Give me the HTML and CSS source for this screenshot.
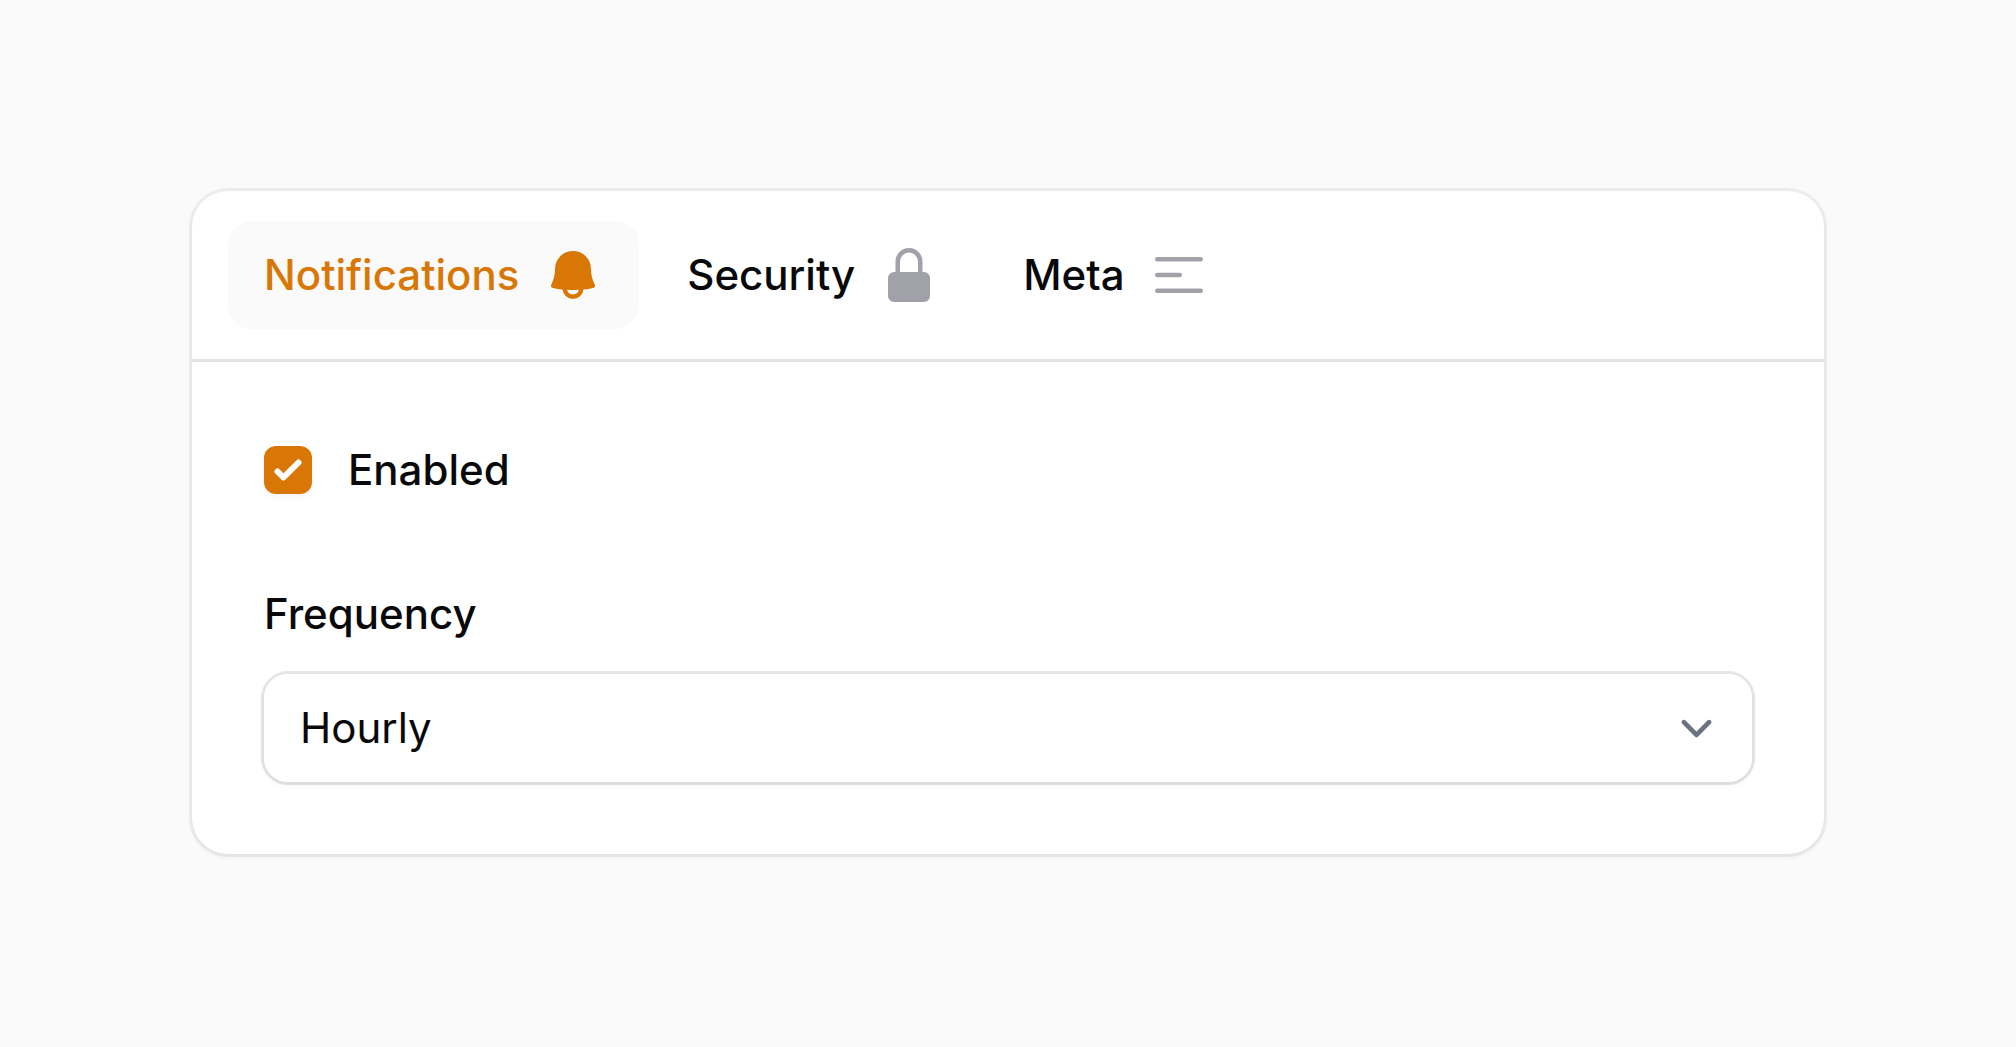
FILE: index.html
```html
<!DOCTYPE html>
<html lang="en">
<head>
    <meta charset="utf-8">
    <title>Notification settings</title>
    <link rel="stylesheet" href="styles.css">
</head>
<body>
    <main class="card">
        <div class="tabs" role="tablist">
            <button class="tab active" type="button" role="tab" aria-selected="true">
                Notifications
                <svg class="tab-icon" viewBox="0 0 20 20" fill="currentColor" aria-hidden="true">
                    <path fill-rule="evenodd" d="M10 2a6 6 0 00-6 6c0 1.887-.454 3.665-1.257 5.234a.75.75 0 00.515 1.076 32.91 32.91 0 003.256.508 3.5 3.5 0 006.972 0 32.903 32.903 0 003.256-.508.75.75 0 00.515-1.076A11.448 11.448 0 0116 8a6 6 0 00-6-6zM8.05 14.943a33.54 33.54 0 003.9 0 2 2 0 01-3.9 0z"/>
                </svg>
            </button>
            <button class="tab" type="button" role="tab" aria-selected="false">
                Security
                <svg class="tab-icon" viewBox="0 0 20 20" fill="currentColor" aria-hidden="true">
                    <path fill-rule="evenodd" d="M10 1a4.5 4.5 0 00-4.5 4.5V9H5a2 2 0 00-2 2v6a2 2 0 002 2h10a2 2 0 002-2v-6a2 2 0 00-2-2h-.5V5.5A4.5 4.5 0 0010 1zm3 8V5.5a3 3 0 10-6 0V9h6z"/>
                </svg>
            </button>
            <button class="tab" type="button" role="tab" aria-selected="false">
                Meta
                <svg class="tab-icon" viewBox="0 0 20 20" fill="currentColor" aria-hidden="true">
                    <path fill-rule="evenodd" d="M2 4.75A.75.75 0 012.75 4h14.5a.75.75 0 010 1.5H2.75A.75.75 0 012 4.75zM2 10a.75.75 0 01.75-.75h7.5a.75.75 0 010 1.5h-7.5A.75.75 0 012 10zm0 5.25a.75.75 0 01.75-.75h14.5a.75.75 0 010 1.5H2.75a.75.75 0 01-.75-.75z"/>
                </svg>
            </button>
        </div>

        <form class="panel" role="tabpanel">
            <label class="check-row">
                <span class="check">
                    <input type="checkbox" name="enabled" checked>
                    <svg viewBox="0 0 16 16" fill="currentColor" aria-hidden="true">
                        <path d="M12.207 4.793a1 1 0 010 1.414l-5 5a1 1 0 01-1.414 0l-2-2a1 1 0 011.414-1.414L6.5 9.086l4.293-4.293a1 1 0 011.414 0z"/>
                    </svg>
                </span>
                Enabled
            </label>

            <div class="field">
                <label for="frequency">Frequency</label>
                <div class="select">
                    <select id="frequency" name="frequency">
                        <option selected>Hourly</option>
                        <option>Daily</option>
                        <option>Weekly</option>
                    </select>
                    <svg class="chevron" viewBox="0 0 20 20" fill="none" stroke="currentColor" stroke-width="1.5" stroke-linecap="round" stroke-linejoin="round" aria-hidden="true">
                        <path d="M6 8l4 4 4-4"/>
                    </svg>
                </div>
            </div>
        </form>
    </main>
</body>
</html>
```
FILE: styles.css
```css
* { box-sizing: border-box; }

body {
    margin: 0;
    padding: 191px 192px;
    background: #fafafa;
    color: #09090b;
    font-family: Inter, sans-serif;
    font-size: 42px;
    font-weight: 500;
    line-height: 72px;
}

.card {
    background: #fff;
    border-radius: 36px;
    box-shadow: 0 0 0 3px rgba(9, 9, 11, 0.05), 0 3px 6px rgba(0, 0, 0, 0.05);
}

/* Tabs */
.tabs {
    display: flex;
    gap: 12px;
    padding: 30px 36px;
    border-bottom: 3px solid #e4e4e5;
}
.tab {
    display: flex;
    align-items: center;
    gap: 24px;
    padding: 24px 36px;
    border: none;
    border-radius: 24px;
    background: none;
    color: inherit;
    font: inherit;
    line-height: 60px;
    cursor: pointer;
}
.tab.active {
    background: #fafafa;
    color: #d97706;
}
.tab-icon {
    width: 60px;
    height: 60px;
    color: #a1a1aa;
}
.tab.active .tab-icon { color: #d97706; }

/* Form */
.panel {
    display: grid;
    gap: 72px;
    padding: 72px;
}
.check-row {
    display: flex;
    align-items: center;
    justify-self: start;
    gap: 36px;
}
.check {
    display: grid;
    width: 48px;
    height: 48px;
}
.check input,
.check svg {
    grid-area: 1 / 1;
    width: 48px;
    height: 48px;
    margin: 0;
}
.check input {
    appearance: none;
    border-radius: 12px;
    background: #fff;
    box-shadow: 0 0 0 3px rgba(9, 9, 11, 0.1);
}
.check input:checked {
    background: #d97706;
    box-shadow: 0 3px 6px rgba(0, 0, 0, 0.05);
}
.check svg {
    color: #fff;
    pointer-events: none;
}

.field {
    display: grid;
    gap: 24px;
}
.field label { justify-self: start; }
.select {
    position: relative;
    border-radius: 24px;
    box-shadow: 0 0 0 3px rgba(9, 9, 11, 0.1), 0 3px 6px rgba(0, 0, 0, 0.05);
}
.select select {
    display: block;
    appearance: none;
    width: 100%;
    height: 108px;
    padding: 0 96px 0 36px;
    border: none;
    border-radius: 24px;
    background: #fff;
    color: inherit;
    font: inherit;
    font-weight: 400;
}
.chevron {
    position: absolute;
    top: 23px;
    right: 24px;
    width: 63px;
    height: 63px;
    color: #6b7280;
    pointer-events: none;
}
```
